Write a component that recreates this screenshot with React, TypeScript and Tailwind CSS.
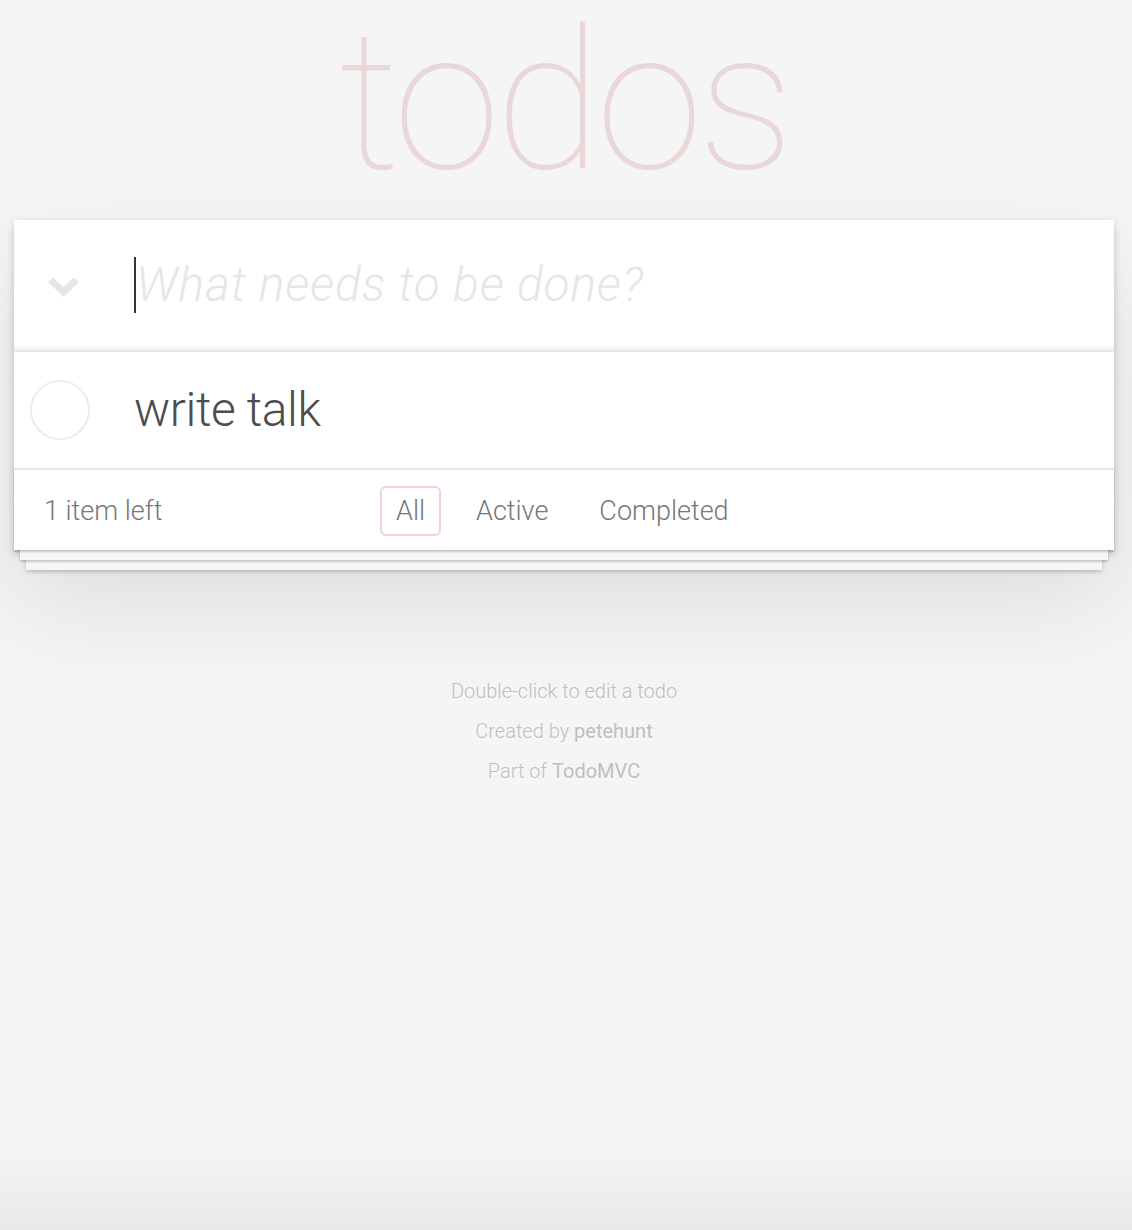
import * as React from "react";

function ToggleAllIcon() {
  return (
    <svg width="31" height="20" viewBox="0 0 31 20" className="fill-[#e6e6e6]">
      <path d="M0 5 L5 0.5 L15.5 10 L26 0.5 L31 5 L15.5 20 Z" />
    </svg>
  );
}

export default function App() {
  const filters = ["All", "Active", "Completed"];

  return (
    <div className="min-h-screen bg-[linear-gradient(to_bottom,#f5f5f5_calc(100%-80px),#e8e8e8)] font-[Roboto,'Liberation_Sans',sans-serif] font-light text-[#4d4d4d]">
      <div className="ml-[14px] w-[1100px]">
        <h1 className="h-[220px] text-center text-[194px] font-thin leading-[204px] tracking-[-5px] text-[rgba(175,47,47,0.15)]">
          todos
        </h1>

        <section className="relative bg-white shadow-[0_4px_8px_0_rgba(0,0,0,0.2),0_50px_100px_0_rgba(0,0,0,0.1)]">
          {/* New todo */}
          <header className="flex h-[130px] items-center shadow-[inset_0_-4px_2px_rgba(0,0,0,0.03)]">
            <div className="flex w-[120px] items-center pl-[34px] pt-[4px]">
              <ToggleAllIcon />
            </div>
            <span className="h-[56px] w-[2px] bg-[#333]" />
            <span className="text-[48px] font-light italic tracking-[0.8px] text-[#e6e6e6]">
              What needs to be done?
            </span>
          </header>

          {/* List */}
          <ul className="border-t-2 border-[#e6e6e6]">
            <li className="flex h-[116px] items-center">
              <div className="ml-[16px] h-[60px] w-[60px] rounded-full border-2 border-[#ededed]" />
              <span className="ml-[44px] text-[48px] leading-[58px] tracking-[-0.4px]">write talk</span>
            </li>
          </ul>

          {/* Footer with stacked pages effect */}
          <footer className="flex h-[82px] items-center border-t-2 border-[#e6e6e6] px-[30px] pt-[2px] text-[27px] text-[#777] shadow-[0_2px_2px_rgba(0,0,0,0.2),0_16px_0_-6px_#f6f6f6,0_18px_2px_-6px_rgba(0,0,0,0.2),0_32px_0_-12px_#f6f6f6,0_34px_4px_-12px_rgba(0,0,0,0.2)]">
            <span className="w-[336px]">1 item left</span>
            <ul className="flex items-center gap-[19px]">
              {filters.map((f, i) => (
                <li key={f}>
                  <span
                    className={`flex h-[50px] items-center rounded-[6px] border-2 px-[14px] ${
                      i === 0 ? "border-[rgba(175,47,47,0.2)]" : "border-transparent"
                    }`}
                  >
                    {f}
                  </span>
                </li>
              ))}
            </ul>
          </footer>
        </section>

        <div className="mt-[131px] text-center text-[20px] leading-none text-[#bfbfbf] [text-shadow:0_2px_0_rgba(255,255,255,0.5)]">
          <p>Double-click to edit a todo</p>
          <p className="mt-[20px]">
            Created by <span className="font-normal">petehunt</span>
          </p>
          <p className="mt-[20px]">
            Part of <span className="font-normal">TodoMVC</span>
          </p>
        </div>
      </div>
    </div>
  );
}
